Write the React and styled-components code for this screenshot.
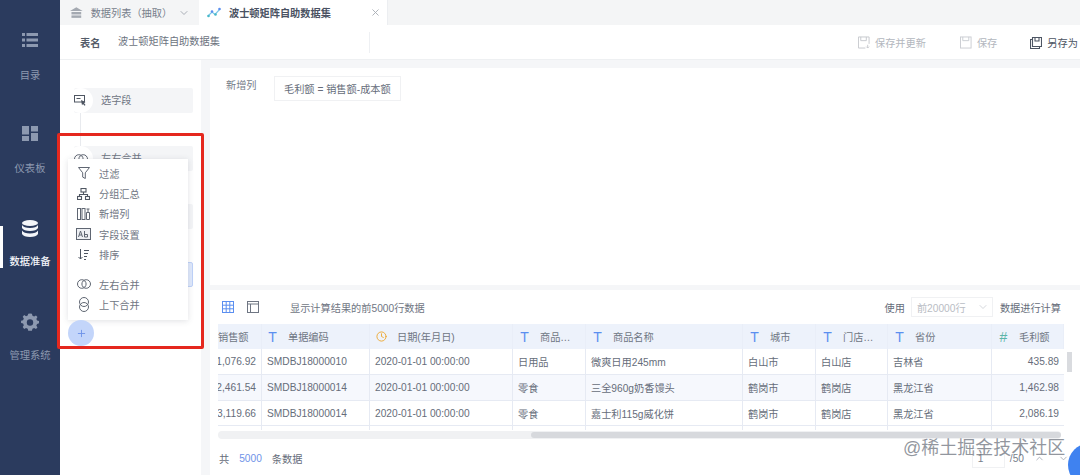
import React from 'react';
import styled, { createGlobalStyle } from 'styled-components';
import { ChevronDown, ChevronUp, X, Plus, Clock } from 'lucide-react';

const GlobalStyle = createGlobalStyle`
  html, body { margin: 0; padding: 0; height: 100%; overflow: hidden; }
  body {
    background: #f5f6f8;
    font-family: "Liberation Sans", "Noto Sans CJK SC", sans-serif;
    font-size: 10.2px;
    color: #5f6775;
  }
  * { box-sizing: border-box; }
`;

const Page = styled.div`
  position: relative;
  display: flex;
  width: 1080px;
  height: 475px;
  overflow: hidden;
`;

const Sidebar = styled.nav`
  flex: 0 0 60px;
  display: flex;
  flex-direction: column;
  padding-top: 33px;
  background: #2b3b5e;
`;

const NavItem = styled.div`
  position: relative;
  height: 93.4px;
  display: flex;
  flex-direction: column;
  align-items: center;
  color: ${p => (p.$active ? '#f4f6fa' : '#8d99b0')};
  font-size: 10.3px;
  line-height: 14px;
  font-weight: ${p => (p.$active ? 500 : 400)};
`;

const NavIcon = styled.span`
  height: 35.5px;
  display: flex;
`;

const ActiveMark = styled.span`
  position: absolute;
  left: 0;
  top: 6px;
  width: 3px;
  height: 42px;
  background: #fff;
`;

const Main = styled.div`
  flex: 1;
  min-width: 0;
  display: flex;
  flex-direction: column;
`;

const TabBar = styled.div`
  height: 25px;
  display: flex;
  background: #f4f5f6;
`;

const Tab = styled.div`
  display: flex;
  align-items: center;
  height: 25px;
  width: ${p => p.$w}px;
  padding-left: ${p => p.$pad}px;
  background: ${p => (p.$active ? '#fff' : 'transparent')};
  border-right: ${p => (p.$active ? '1px solid #eceef1' : 'none')};
  color: ${p => (p.$active ? '#4a5262' : '#777e8b')};
  font-size: 10.2px;
  font-weight: ${p => (p.$active ? 700 : 400)};
  gap: 8px;
`;

const TabEnd = styled.span`
  margin-left: auto;
  margin-right: ${p => p.$right}px;
  display: flex;
  color: #a9aeb6;
`;

const TitleBar = styled.div`
  height: 35px;
  display: flex;
  align-items: center;
  padding: 1px 0 0 20px;
  background: #fff;
  border-bottom: 1px solid #eef0f2;
`;

const TitleLabel = styled.span`
  width: 38px;
  font-weight: 700;
  font-size: 10.2px;
  color: #555c69;
`;

const TitleInput = styled.div`
  width: 252px;
  height: 21px;
  line-height: 19px;
  border-right: 1px solid #eef0f3;
  color: #6c7380;
  font-size: 10.2px;
`;

const Actions = styled.div`
  margin-left: auto;
  display: flex;
  align-items: center;
  width: 222px;
`;

const ActionBtn = styled.span`
  display: flex;
  align-items: center;
  gap: 5px;
  margin-right: ${p => p.$gap}px;
  white-space: nowrap;
  color: ${p => (p.$on ? '#4d5563' : '#b3b7be')};
  font-size: 10.2px;
`;

const Body = styled.div`
  flex: 1;
  min-height: 0;
  display: flex;
`;

const FlowPanel = styled.div`
  flex: 0 0 141px;
  display: flex;
  flex-direction: column;
  padding: 28px 8px 0 14px;
  background: #fff;
`;

const FlowStep = styled.div`
  position: relative;
  height: 25px;
  margin-bottom: ${p => p.$gap}px;
  padding-left: 27px;
  line-height: 25px;
  border-radius: 2px;
  background: ${p => (p.$blue ? '#dfe9fc' : '#f4f5f7')};
  border: ${p => (p.$blue ? '1px solid #bfd2f8' : 'none')};
  color: #6f7683;
  font-size: 10.2px;
`;

const FlowIcon = styled.span`
  position: absolute;
  left: -6px;
  top: 0;
  width: 25px;
  height: 25px;
  border-radius: 50%;
  background: #fff;
  display: flex;
  align-items: center;
  justify-content: center;
`;

const Connector = styled.span`
  position: absolute;
  left: 6px;
  top: 25px;
  width: 1px;
  height: 33px;
  background: #e8eaee;
`;

const Content = styled.div`
  flex: 1;
  min-width: 0;
  display: flex;
  flex-direction: column;
  gap: 5px;
  padding: 8px 0 0 9px;
`;

const ConfigPanel = styled.div`
  height: 217px;
  display: flex;
  align-items: flex-start;
  padding: 8px 0 0 16px;
  background: #fff;
`;

const ConfigLabel = styled.span`
  width: 48px;
  line-height: 20px;
  color: #767d89;
  font-size: 10.2px;
`;

const ConfigChip = styled.div`
  height: 25px;
  padding: 0 9px;
  line-height: 25px;
  border: 1px solid #f0f1f3;
  color: #666d7a;
  font-size: 10.2px;
`;

const DataPanel = styled.div`
  position: relative;
  flex: 1;
  min-height: 0;
  padding: 0 16px 0 8px;
  background: #fff;
`;

const DataBar = styled.div`
  height: 34px;
  display: flex;
  align-items: center;
  padding-left: 4px;
  font-size: 10.2px;
`;

const ViewIcon = styled.span`
  display: flex;
  margin-right: ${p => p.$gap}px;
`;

const DataHint = styled.span`
  color: #6f7683;
`;

const SampleCtl = styled.div`
  margin-left: auto;
  display: flex;
  align-items: center;
  color: #666d7a;
  margin-right: 3px;
`;

const SampleSelect = styled.div`
  width: 82px;
  height: 20px;
  margin: 0 7px 0 6px;
  padding: 0 3px 0 5px;
  display: flex;
  align-items: center;
  justify-content: space-between;
  border: 1px solid #f0f1f3;
  color: #b9bdc4;
`;

const TableWrap = styled.div`
  width: 846px;
  height: 106px;
  overflow: hidden;
`;

const Row = styled.div`
  display: grid;
  grid-template-columns: 44px 108px 143px 73px 157px 73px 72px 104px 72px;
  height: ${p => p.$h}px;
  background: ${p => (p.$head ? '#edf2fb' : p.$alt ? '#f6f8fd' : '#fff')};
  border-bottom: ${p => (p.$head ? 'none' : '1px solid #e6eaf3')};
`;

const Cell = styled.div`
  display: flex;
  align-items: center;
  justify-content: ${p => (p.$right ? 'flex-end' : 'flex-start')};
  padding: 0 5px 0 ${p => (p.$right ? 0 : 5)}px;
  border-right: ${p => (p.$last ? 'none' : '1px solid #e6eaf3')};
  color: #666d7a;
  font-size: 10.2px;
  white-space: nowrap;
  overflow: hidden;
`;

const HeadCell = styled(Cell)`
  padding-left: ${p => p.$pad ?? 6}px;
  border-right: 1px solid #e9eef8;
  color: #6f7683;
  gap: 10px;
`;

const TypeMark = styled.span`
  width: 11px;
  text-align: center;
  font-size: 14px;
  line-height: 14px;
  color: ${p => p.$color || '#5b8ff0'};
`;

const VScroll = styled.span`
  position: absolute;
  left: 857px;
  top: 62px;
  width: 5px;
  height: 20px;
  background: #d9dbdf;
`;

const HTrack = styled.div`
  position: relative;
  width: 843px;
  height: 8px;
  margin-top: 1px;
  background: #f0f1f3;
  border-radius: 4px;
`;

const HThumb = styled.span`
  position: absolute;
  left: 313px;
  right: 0;
  top: 1px;
  height: 6px;
  background: #d7d9dd;
  border-radius: 3px;
`;

const Footer = styled.div`
  height: 37px;
  display: flex;
  align-items: center;
  padding: 2px 0 0 1px;
  gap: 10px;
  color: #666d7a;
  font-size: 10.2px;
`;

const Count = styled.span`
  color: #6f93e8;
`;

const Pager = styled.div`
  position: absolute;
  right: 7px;
  bottom: 7px;
  display: flex;
  align-items: center;
  color: #777e8b;
`;

const PageInput = styled.span`
  width: 33px;
  height: 20px;
  padding-left: 5px;
  line-height: 20px;
  border: 1px solid #f0f1f3;
  margin-right: 5px;
`;

const PageBtn = styled.span`
  display: flex;
  align-items: center;
  justify-content: center;
  width: 20px;
  height: 20px;
  margin-left: ${p => p.$gap || 0}px;
  color: #aab0b9;
`;

const Watermark = styled.div`
  position: absolute;
  left: 903px;
  top: 436px;
  color: rgba(110, 116, 126, 0.75);
  font-size: 18px;
  line-height: 24px;
  white-space: nowrap;
`;

const HelpDot = styled.span`
  position: absolute;
  left: 1068px;
  top: 443px;
  width: 44px;
  height: 44px;
  border-radius: 50%;
  background: #3f82f0;
`;

const Highlight = styled.div`
  position: absolute;
  left: 57px;
  top: 133px;
  width: 147px;
  height: 216px;
  border: 3px solid #e5281e;
  border-radius: 2px;
  pointer-events: none;
`;

const AddMenu = styled.div`
  position: absolute;
  left: 68px;
  top: 159px;
  width: 120px;
  height: 161px;
  padding-top: 4px;
  background: #fff;
  box-shadow: 0 1px 6px rgba(60, 70, 90, 0.16);
`;

const MenuItem = styled.div`
  height: 20.4px;
  display: flex;
  align-items: center;
  padding-left: 8px;
  gap: 8px;
  margin-top: ${p => p.$gap || 0}px;
  color: #6f7683;
  font-size: 10.2px;
`;

const MenuGlyph = styled.span`
  width: 15px;
  display: flex;
  justify-content: center;
`;

const AddButton = styled.div`
  position: absolute;
  left: 68px;
  top: 320px;
  width: 26px;
  height: 26px;
  border-radius: 50%;
  background: #c3d5fa;
  color: #6e93e8;
  display: flex;
  align-items: center;
  justify-content: center;
`;

const ListIcon = () => (
  <svg width="16" height="14" viewBox="0 0 16 14" fill="currentColor">
    <rect x="0" y="0" width="3" height="3" />
    <rect x="4.500" y="0" width="11.500" height="3" />
    <rect x="0" y="5.500" width="3" height="3" />
    <rect x="4.500" y="5.500" width="11.500" height="3" />
    <rect x="0" y="11" width="3" height="3" />
    <rect x="4.500" y="11" width="11.500" height="3" />
  </svg>
);

const BoardIcon = () => (
  <svg width="16" height="15" viewBox="0 0 16 15" fill="currentColor">
    <rect x="0" y="0" width="7" height="8.500" />
    <rect x="9" y="0" width="7" height="5.500" />
    <rect x="0" y="10" width="7" height="5" />
    <rect x="9" y="7" width="7" height="8" />
  </svg>
);

const DbIcon = () => (
  <svg width="16" height="17" viewBox="0 0 16 17" fill="currentColor">
    <ellipse cx="8" cy="3" rx="8" ry="3" />
    <path d="M0 5c1 2 4 3 8 3s7-1 8-3v3c-1 2-4 3-8 3S1 10 0 8z" />
    <path d="M0 10.500c1 2 4 3 8 3s7-1 8-3V14c-1 2-4 3-8 3s-7-1-8-3z" />
  </svg>
);

const GearIcon = () => (
  <svg width="18" height="19" viewBox="0 0 18 18" fill="none">
    <path d="M9 0l2 .2.600 2.300 1.800.8 2-1.200 1.600 1.800-1.200 2 .8 1.800 2.200.600v2.400l-2.200.600-.8 1.800 1.200 2-1.600 1.800-2-1.200-1.800.8-.6 2.300H7l-.6-2.300-1.800-.8-2 1.200L1 14.700l1.200-2-.8-1.800L-.8 10.300V7.900l2.200-.6.800-1.800L1 3.500l1.600-1.800 2 1.200 1.800-.8L7 .2z" transform="translate(.8 0) scale(.92)" fill="#8d99b0" />
    <circle cx="9" cy="9" r="3.200" fill="#2b3b5e" />
  </svg>
);

const HomeIcon = () => (
  <svg width="13" height="11" viewBox="0 0 13 11" fill="#a4a9b1">
    <path d="M6.500 0L13 4H0z" />
    <rect x="1.500" y="5" width="10" height="2.500" />
    <rect x="1.500" y="8.500" width="10" height="2.500" />
  </svg>
);

const TrendIcon = () => (
  <svg width="14" height="11" viewBox="0 0 14 11" fill="none" strokeWidth="1.200">
    <path d="M1 9l4-4 3 2.500L13 2" stroke="#7cc6e8" />
    <circle cx="1.500" cy="9" r="1.300" fill="#47b8c9" />
    <circle cx="5" cy="4.500" r="1.300" fill="#5b8ff0" />
    <circle cx="8.500" cy="7.500" r="1.300" fill="#47b8c9" />
    <circle cx="12.500" cy="2" r="1.300" fill="#5b8ff0" />
  </svg>
);

const SaveUpdateIcon = () => (
  <svg width="12" height="13" viewBox="0 0 13 13" fill="none" stroke="#c4c7cc">
    <path d="M8 12.500H.5V.5h11.500V8" />
    <path d="M3 .5v4h6v-4M10.500 9v3.500M9 11l1.500 1.500L12 11" />
  </svg>
);

const SaveIcon = () => (
  <svg width="12" height="13" viewBox="0 0 13 13" fill="none" stroke="#c9ccd1">
    <rect x=".5" y=".5" width="11.500" height="12" />
    <path d="M3 .5v4h6.500v-4" />
  </svg>
);

const SaveAsIcon = () => (
  <svg width="12" height="12" viewBox="0 0 12 12" fill="none" stroke="#4d5563" strokeWidth="1.100">
    <path d="M2.500 9.500V.5h9v9z" />
    <path d="M5 .5v3.500h4V.500M2.500 2.500H.5v9h9V9.500" />
  </svg>
);

const PickIcon = () => (
  <svg width="13" height="12" viewBox="0 0 13 12" fill="none" stroke="#4f5662">
    <rect x=".5" y=".5" width="10" height="6.500" />
    <path d="M2.500 3.500h4" />
    <path d="M7 5l4.500 2-1.500 1 1.500 2-1 .8L9 9l-1 1.200z" fill="#4f5662" stroke="none" />
  </svg>
);

const JoinIcon = () => (
  <svg width="14" height="10" viewBox="0 0 14 10" fill="none" stroke="#5f6672">
    <circle cx="4.800" cy="5" r="4.300" />
    <circle cx="9.200" cy="5" r="4.300" />
  </svg>
);

const FunnelIcon = () => (
  <svg width="12" height="12" viewBox="0 0 12 12" fill="none" stroke="#5f6672">
    <path d="M.5 .5h11L7.300 5.800v5.700l-2.600-1.400V5.800z" />
  </svg>
);

const GroupIcon = () => (
  <svg width="13" height="12" viewBox="0 0 13 12" fill="none" stroke="#4f5662" strokeWidth="1.100">
    <rect x="4" y=".5" width="5" height="3.500" />
    <path d="M6.500 4v2.500M2.500 8.500v-2h8v2" />
    <rect x=".5" y="8.500" width="4" height="3" />
    <rect x="8.500" y="8.500" width="4" height="3" />
  </svg>
);

const ColumnsIcon = () => (
  <svg width="13" height="12" viewBox="0 0 13 12" fill="none" stroke="#5f6672">
    <rect x=".5" y=".5" width="3" height="11" />
    <rect x="5" y=".5" width="3" height="11" />
    <path d="M9.500 1h3M11 1v3M9.500 4.500h3v7h-3z" />
  </svg>
);

const FieldIcon = () => (
  <svg width="15" height="12" viewBox="0 0 15 12" fill="#eef0f4" stroke="#5f6672">
    <rect x=".5" y=".5" width="14" height="11" />
    <path fill="none" d="M2.500 9l2-6 2 6M3.200 7h2.600M8.500 3v6M8.500 6.500h3v2.500h-3" />
  </svg>
);

const SortIcon = () => (
  <svg width="11" height="11" viewBox="0 0 11 11" fill="none" stroke="#4f5662">
    <path d="M2.500 0v10M.5 8l2 2 2-2M6 1.500h5M6 4.500h4M6 7.500h3M6 10.500h2" />
  </svg>
);

const StackIcon = () => (
  <svg width="10" height="15" viewBox="0 0 10 15" fill="none" stroke="#5f6672">
    <circle cx="5" cy="5" r="4.500" />
    <circle cx="5" cy="10" r="4.500" />
  </svg>
);

const GridIcon = () => (
  <svg width="12" height="12" viewBox="0 0 12 12" fill="none" stroke="#5b8ff0">
    <rect x=".5" y=".5" width="11" height="11" />
    <path d="M4.200 .5v11M7.800 .5v11M.5 4.200h11M.5 7.800h11" />
  </svg>
);

const PanelIcon = () => (
  <svg width="12" height="12" viewBox="0 0 12 12" fill="none" stroke="#6f7683">
    <rect x=".5" y=".5" width="11" height="11" />
    <path d="M.5 3h11M3.500 3v8.500" />
  </svg>
);

const Head = ({ mark, color, pad, children }) => (
  <HeadCell $pad={pad}>
    {mark === 'clock' ? (
      <Clock size={11} color="#eda72f" />
    ) : mark ? (
      <TypeMark $color={color}>{mark}</TypeMark>
    ) : null}
    <span>{children}</span>
  </HeadCell>
);

const rows = [
  ['1,076.92', 'SMDBJ18000010', '日用品', '微爽日用245mm', '白山市', '白山店', '吉林省', '435.89'],
  ['2,461.54', 'SMDBJ18000014', '零食', '三全960g奶香馒头', '鹤岗市', '鹤岗店', '黑龙江省', '1,462.98'],
  ['3,119.66', 'SMDBJ18000014', '零食', '嘉士利115g威化饼', '鹤岗市', '鹤岗店', '黑龙江省', '2,086.19'],
];

const menu = [
  [<FunnelIcon key="f" />, '过滤'],
  [<GroupIcon key="g" />, '分组汇总'],
  [<ColumnsIcon key="c" />, '新增列'],
  [<FieldIcon key="a" />, '字段设置'],
  [<SortIcon key="s" />, '排序'],
];

export default function App() {
  return (
    <Page>
      <GlobalStyle />
      <Sidebar>
        <NavItem>
          <NavIcon>
            <ListIcon />
          </NavIcon>
          目录
        </NavItem>
        <NavItem>
          <NavIcon>
            <BoardIcon />
          </NavIcon>
          仪表板
        </NavItem>
        <NavItem $active>
          <ActiveMark />
          <NavIcon>
            <DbIcon />
          </NavIcon>
          数据准备
        </NavItem>
        <NavItem>
          <NavIcon>
            <GearIcon />
          </NavIcon>
          管理系统
        </NavItem>
      </Sidebar>
      <Main>
        <TabBar>
          <Tab $w={139} $pad={10}>
            <HomeIcon />
            <span>数据列表（抽取）</span>
            <TabEnd $right={9}>
              <ChevronDown size={12} />
            </TabEnd>
          </Tab>
          <Tab $active $w={189} $pad={8}>
            <TrendIcon />
            <span>波士顿矩阵自助数据集</span>
            <TabEnd $right={6}>
              <X size={11} />
            </TabEnd>
          </Tab>
        </TabBar>
        <TitleBar>
          <TitleLabel>表名</TitleLabel>
          <TitleInput>波士顿矩阵自助数据集</TitleInput>
          <Actions>
            <ActionBtn $gap={34}>
              <SaveUpdateIcon />
              保存并更新
            </ActionBtn>
            <ActionBtn $gap={33}>
              <SaveIcon />
              保存
            </ActionBtn>
            <ActionBtn $on $gap={0}>
              <SaveAsIcon />
              另存为
            </ActionBtn>
          </Actions>
        </TitleBar>
        <Body>
          <FlowPanel>
            <FlowStep $gap={33}>
              <FlowIcon>
                <PickIcon />
              </FlowIcon>
              <Connector />
              选字段
            </FlowStep>
            <FlowStep $gap={33}>
              <FlowIcon>
                <JoinIcon />
              </FlowIcon>
              <Connector />
              左右合并
            </FlowStep>
            <FlowStep $gap={33}>
              <Connector />
              新增列
            </FlowStep>
            <FlowStep $blue $gap={0}>
              新增列
            </FlowStep>
          </FlowPanel>
          <Content>
            <ConfigPanel>
              <ConfigLabel>新增列</ConfigLabel>
              <ConfigChip>毛利额 = 销售额-成本额</ConfigChip>
            </ConfigPanel>
            <DataPanel>
              <DataBar>
                <ViewIcon $gap={13}>
                  <GridIcon />
                </ViewIcon>
                <ViewIcon $gap={31}>
                  <PanelIcon />
                </ViewIcon>
                <DataHint>显示计算结果的前5000行数据</DataHint>
                <SampleCtl>
                  使用
                  <SampleSelect>
                    前20000行
                    <ChevronDown size={12} color="#d5d8dd" />
                  </SampleSelect>
                  数据进行计算
                </SampleCtl>
              </DataBar>
              <TableWrap>
                <Row $head $h={25}>
                  <Head pad={0}>销售额</Head>
                  <Head mark="T" pad={5}>单据编码</Head>
                  <Head mark="clock" pad={6}>日期(年月日)</Head>
                  <Head mark="T" pad={6}>商品…</Head>
                  <Head mark="T" pad={6}>商品名称</Head>
                  <Head mark="T" pad={6}>城市</Head>
                  <Head mark="T" pad={6}>门店…</Head>
                  <Head mark="T" pad={6}>省份</Head>
                  <Head mark="#" color="#5cb5a8" pad={6}>毛利额</Head>
                </Row>
                {rows.map((r, i) => (
                  <Row key={r[0]} $alt={i === 1} $h={i === 2 ? 25 : 26}>
                    <Cell $right>{r[0]}</Cell>
                    <Cell>{r[1]}</Cell>
                    <Cell>2020-01-01 00:00:00</Cell>
                    <Cell>{r[2]}</Cell>
                    <Cell>{r[3]}</Cell>
                    <Cell>{r[4]}</Cell>
                    <Cell>{r[5]}</Cell>
                    <Cell>{r[6]}</Cell>
                    <Cell $right $last>{r[7]}</Cell>
                  </Row>
                ))}
                <Row $h={5}>
                  {Array.from({ length: 9 }, (_, i) => (
                    <Cell key={i} $last={i === 8} />
                  ))}
                </Row>
              </TableWrap>
              <VScroll />
              <HTrack>
                <HThumb />
              </HTrack>
              <Footer>
                共<Count>5000</Count>条数据
              </Footer>
              <Pager>
                <PageInput>1</PageInput>
                /50
                <PageBtn $gap={5}>
                  <ChevronUp size={11} />
                </PageBtn>
                <PageBtn $gap={4}>
                  <ChevronDown size={11} />
                </PageBtn>
              </Pager>
            </DataPanel>
          </Content>
        </Body>
      </Main>
      <AddMenu>
        {menu.map(([icon, label]) => (
          <MenuItem key={label}>
            <MenuGlyph>{icon}</MenuGlyph>
            {label}
          </MenuItem>
        ))}
        <MenuItem $gap={9}>
          <MenuGlyph>
            <JoinIcon />
          </MenuGlyph>
          左右合并
        </MenuItem>
        <MenuItem>
          <MenuGlyph>
            <StackIcon />
          </MenuGlyph>
          上下合并
        </MenuItem>
      </AddMenu>
      <AddButton>
        <Plus size={11} />
      </AddButton>
      <Highlight />
      <Watermark>@稀土掘金技术社区</Watermark>
      <HelpDot />
    </Page>
  );
}
